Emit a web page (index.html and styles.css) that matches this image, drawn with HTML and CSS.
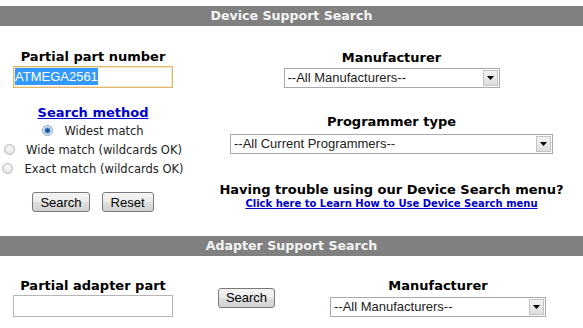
FILE: index.html
```html
<!DOCTYPE html>
<html>
<head>
<meta charset="UTF-8">
<title>Device Support Search</title>
<link rel="stylesheet" href="styles.css">
</head>
<body>
<div class="page">
  <div class="bar">Device Support Search</div>
  <div class="device">
    <div class="col-left">
      <div class="label">Partial part number</div>
      <div class="textbox focused"><span class="picked">ATMEGA2561</span></div>
      <a class="method" href="#">Search method</a>
      <div class="opt"><span class="radio checked"></span>Widest match</div>
      <div class="opt"><span class="radio"></span>Wide match (wildcards OK)</div>
      <div class="opt"><span class="radio"></span>Exact match (wildcards OK)</div>
      <div class="buttons">
        <button class="btn">Search</button>
        <button class="btn">Reset</button>
      </div>
    </div>
    <div class="col-right">
      <div class="label">Manufacturer</div>
      <div class="select mfr">
        <span class="value">--All Manufacturers--</span>
        <span class="arrow"><svg width="7" height="4" viewBox="0 0 7 4"><path d="M0 0h7L3.5 4z" fill="#000"/></svg></span>
      </div>
      <div class="label prog">Programmer type</div>
      <div class="select progsel">
        <span class="value">--All Current Programmers--</span>
        <span class="arrow"><svg width="7" height="4" viewBox="0 0 7 4"><path d="M0 0h7L3.5 4z" fill="#000"/></svg></span>
      </div>
      <div class="trouble">Having trouble using our Device Search menu?</div>
      <a class="howto" href="#">Click here to Learn How to Use Device Search menu</a>
    </div>
  </div>

  <div class="bar">Adapter Support Search</div>
  <div class="adapter">
    <div class="col">
      <div class="label">Partial adapter part</div>
      <div class="textbox"></div>
    </div>
    <div class="col">
      <button class="btn">Search</button>
    </div>
    <div class="col">
      <div class="label">Manufacturer</div>
      <div class="select mfr">
        <span class="value">--All Manufacturers--</span>
        <span class="arrow"><svg width="7" height="4" viewBox="0 0 7 4"><path d="M0 0h7L3.5 4z" fill="#000"/></svg></span>
      </div>
    </div>
  </div>
</div>
</body>
</html>
```

FILE: styles.css
```css
body {
	margin:0;
	background-color:#fff;
	color:#000;
	font-family:"DejaVu Sans", Verdana, sans-serif;
}

.page
{
	padding-top:6px;
}

.bar
{
	background-color:#808080;
	color:#f4f4f4;
	font-weight:bold;
	font-size:12.6px;
	height:20px;
	line-height:20px;
	text-align:center;
}

.label
{
	font-weight:bold;
	font-size:13px;
	line-height:16px;
}

/* top block */
.device
{
	display:grid;
	grid-template-columns:186px 1fr;
	column-gap:14px;
	height:210px;
}

.col-left
{
	display:flex;
	flex-direction:column;
	align-items:center;
	padding-top:23px;
}

.col-left .label
{
	margin-bottom:1px;
}

.textbox
{
	box-sizing:border-box;
	width:160px;
	height:22px;
	border:1px solid #b5b5b5;
	background:#fff;
	font-family:"Liberation Sans", Arial, sans-serif;
	font-size:13px;
	line-height:20px;
	text-align:left;
}

.textbox.focused
{
	border-color:#e0b56c;
	box-shadow:inset 0 0 0 1px #f6e7cb;
	padding:1px 0 0 1px;
	line-height:17px;
}

.picked
{
	display:inline-block;
	background:#3399ff;
	color:#fff;
	height:17px;
}

.method
{
	margin-top:17px;
	font-weight:bold;
	font-size:13px;
	line-height:16px;
	color:#0000cc;
}

.opt
{
	display:flex;
	align-items:center;
	font-size:11.5px;
	height:19px;
	color:#222;
}

.radio
{
	box-sizing:border-box;
	width:11px;
	height:11px;
	border-radius:50%;
	border:1px solid #b9b9b9;
	background:radial-gradient(circle at 50% 35%, #fafafa, #dcdcdc);
	margin-right:11px;
}

.radio.checked
{
	border-color:#8c9db3;
	background:radial-gradient(circle, #0c3c78 0, #2f6fb8 2px, #8bb6e6 3px, #eef3f8 4px);
}

.buttons
{
	display:flex;
	gap:12px;
	margin-top:14px;
}

.btn
{
	box-sizing:border-box;
	height:20px;
	padding:0 7px;
	border:1px solid #7a7a7a;
	border-radius:3px;
	background:linear-gradient(#f4f4f4, #ececec 48%, #dedede 52%, #d2d2d2);
	font-family:"Liberation Sans", Arial, sans-serif;
	font-size:13px;
	color:#000;
	min-width:52px;
}

.col-right
{
	display:flex;
	flex-direction:column;
	align-items:center;
	padding-top:24px;
}

.select
{
	box-sizing:border-box;
	display:flex;
	align-items:stretch;
	height:20px;
	border:1px solid #a9a9a9;
	background:#fff;
	font-family:"Liberation Sans", Arial, sans-serif;
	font-size:13px;
	color:#222;
	margin-top:2px;
}

.select.mfr
{
	width:216px;
}

.select.progsel
{
	width:323px;
}

.select .value
{
	flex:1;
	padding-left:3px;
	line-height:18px;
}

.select .arrow
{
	box-sizing:border-box;
	width:15px;
	margin:1px;
	border:1px solid #c3c3c3;
	background:linear-gradient(#f3f3f3, #dedede);
	display:flex;
	align-items:center;
	justify-content:center;
}

.prog
{
	margin-top:26px;
}

.progsel
{
	margin-top:4px;
}

.trouble
{
	margin-top:28px;
	font-weight:bold;
	font-size:13px;
	line-height:15px;
}

.howto
{
	font-weight:bold;
	font-size:10px;
	line-height:13px;
	color:#0000cc;
}

/* bottom block */
.adapter
{
	display:grid;
	grid-template-columns:186px 121px 1fr;
	padding-right:14px;
	align-items:center;
	padding-top:22px;
}

.adapter .col
{
	display:flex;
	flex-direction:column;
	align-items:center;
}

.adapter .label
{
	margin-bottom:1px;
}
```
